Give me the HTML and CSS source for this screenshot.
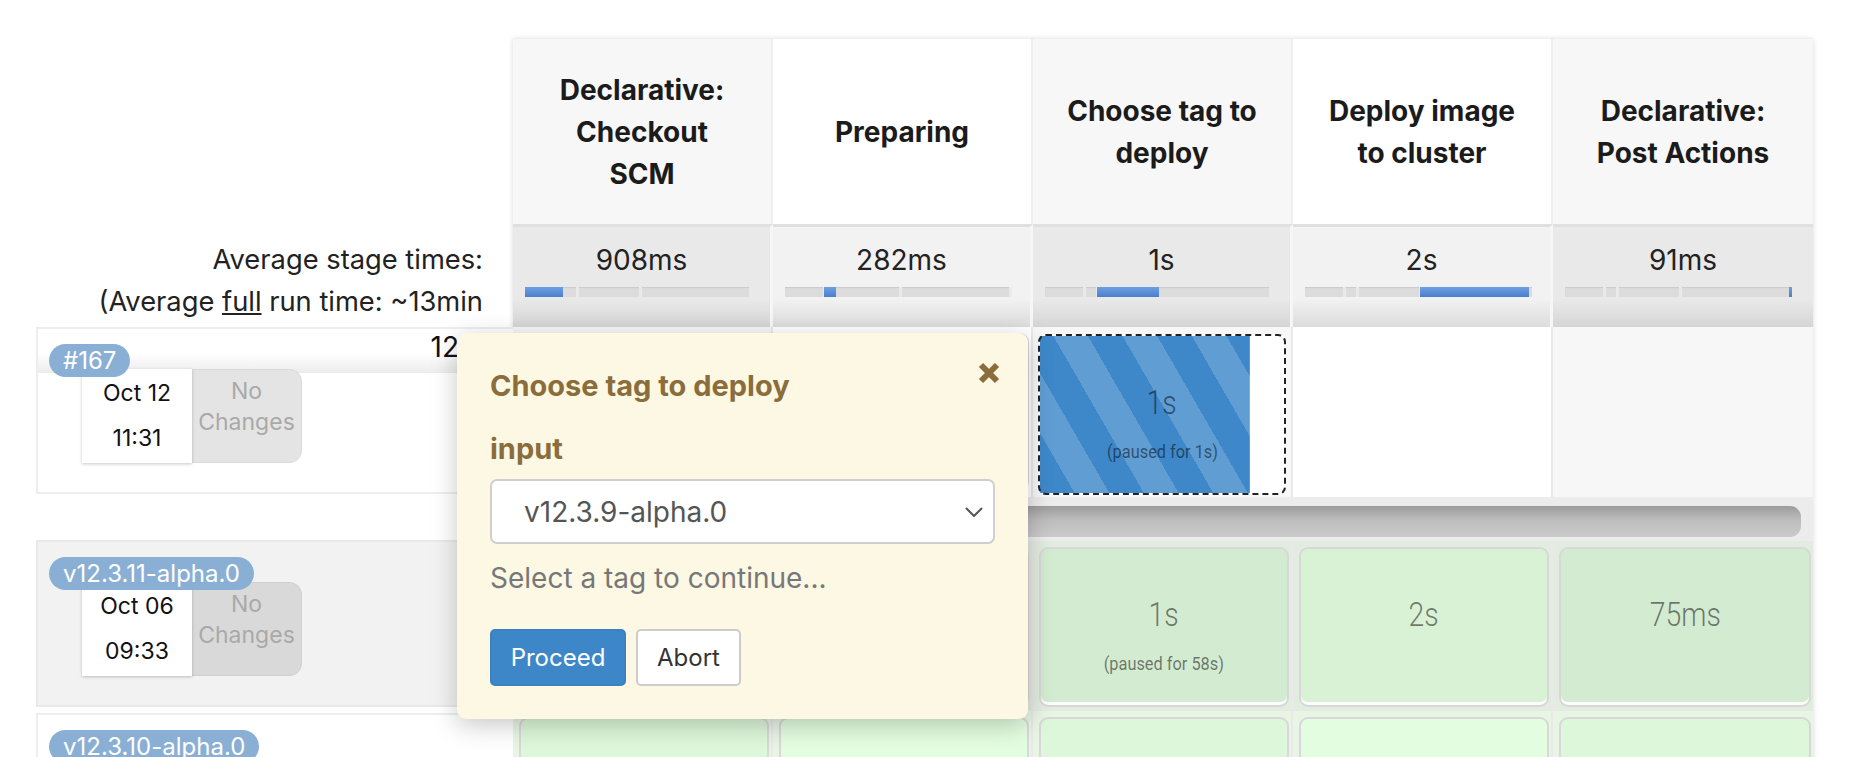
FILE: index.html
```html
<!DOCTYPE html>
<html>
<head>
<meta charset="utf-8">
<title>Stage View</title>
<link rel="stylesheet" href="styles.css">
</head>
<body>
<div class="view">
  <div class="left">
    <div class="left-head"></div>
    <div class="avg-label">Average stage times:<br>(Average <u>full</u> run time: ~13min</div>
    <div class="build">
      <div class="band shade"><span class="dur">12</span></div>
      <span class="badge">#167</span>
      <div class="commit">
        <div class="date">Oct 12<br>11:31</div>
        <div class="changes">No<br>Changes</div>
      </div>
    </div>
    <div class="build-gap"></div>
    <div class="build alt">
      <div class="band"></div>
      <span class="badge">v12.3.11-alpha.0</span>
      <div class="commit">
        <div class="date">Oct 06<br>09:33</div>
        <div class="changes">No<br>Changes</div>
      </div>
    </div>
    <div class="build-gap-small"></div>
    <div class="build last-build">
      <span class="badge">v12.3.10-alpha.0</span>
    </div>
  </div>

  <div class="stages">
    <div class="sh odd">Declarative:<br>Checkout<br>SCM</div>
    <div class="sh even">Preparing</div>
    <div class="sh odd">Choose tag to<br>deploy</div>
    <div class="sh even">Deploy image<br>to cluster</div>
    <div class="sh odd last">Declarative:<br>Post Actions</div>

    <div class="avg odd"><div class="t">908ms</div><div class="pbar"><i class="tick" style="left:51px"></i><i class="tick" style="left:114px"></i><i class="tick" style="left:224px"></i><b class="seg" style="left:0;width:38px"></b></div></div>
    <div class="avg even"><div class="t">282ms</div><div class="pbar"><i class="tick" style="left:38px"></i><i class="tick" style="left:114px"></i><i class="tick" style="left:224px"></i><b class="seg" style="left:39px;width:12px"></b></div></div>
    <div class="avg odd"><div class="t">1s</div><div class="pbar"><i class="tick" style="left:38px"></i><i class="tick" style="left:51px"></i><i class="tick" style="left:224px"></i><b class="seg" style="left:52px;width:62px"></b></div></div>
    <div class="avg even"><div class="t">2s</div><div class="pbar"><i class="tick" style="left:38px"></i><i class="tick" style="left:51px"></i><i class="tick" style="left:114px"></i><b class="seg" style="left:115px;width:109px"></b></div></div>
    <div class="avg odd last"><div class="t">91ms</div><div class="pbar"><i class="tick" style="left:38px"></i><i class="tick" style="left:51px"></i><i class="tick" style="left:114px"></i><b class="seg" style="left:224px;width:3px"></b></div></div>

    <div class="cell r1 odd"><div class="box ok"></div></div>
    <div class="cell r1 even"><div class="box ok even"></div></div>
    <div class="cell r1 odd"><div class="run"><span class="big">1s</span><span class="small">(paused for 1s)</span></div></div>
    <div class="cell r1 even"></div>
    <div class="cell r1 odd last"></div>

    <div class="barrow"><div class="bar"></div></div>

    <div class="cell r2"><div class="box ok"></div></div>
    <div class="cell r2"><div class="box ok even"></div></div>
    <div class="cell r2"><div class="box ok"><span class="big">1s</span><span class="small">(paused for 58s)</span></div></div>
    <div class="cell r2"><div class="box ok even"><span class="big">2s</span></div></div>
    <div class="cell r2 last"><div class="box ok"><span class="big">75ms</span></div></div>

    <div class="cell r3"><div class="box ok3"></div></div>
    <div class="cell r3"><div class="box ok3 even"></div></div>
    <div class="cell r3"><div class="box ok3"></div></div>
    <div class="cell r3"><div class="box ok3 even"></div></div>
    <div class="cell r3 last"><div class="box ok3"></div></div>
  </div>

  <div class="popup">
    <div class="pop-title">Choose tag to deploy</div>
    <svg class="close" width="22" height="22" viewBox="0 0 22 22"><path d="M3 3 L19 19 M19 3 L3 19" stroke="#8a6d3b" stroke-width="6" fill="none"/></svg>
    <div class="pop-label">input</div>
    <div class="select"><span>v12.3.9-alpha.0</span><svg width="18" height="10" viewBox="0 0 18 10"><polyline points="1,1 9,9 17,1" fill="none" stroke="#555" stroke-width="2"/></svg></div>
    <div class="help">Select a tag to continue...</div>
    <div class="buttons"><span class="btn primary">Proceed</span><span class="btn">Abort</span></div>
  </div>
</div>
</body>
</html>
```
FILE: styles.css
```css
* { box-sizing: border-box; }
html, body { margin: 0; height: 757px; overflow: hidden; }
body { font-family: Inter, "Liberation Sans", sans-serif; color: #1b1b1b; background: #fff; }

.view { position: relative; display: flex; align-items: flex-start; padding: 39px 0 0 36px; }

/* left column */
.left { width: 477px; flex: none; display: flex; flex-direction: column; }
.left-head { height: 185px; flex: none; }
.avg-label { height: 103px; flex: none; padding: 15px 30px 0 0; text-align: right; font-size: 27.3px; line-height: 42px; color: #222; white-space: nowrap; }
.build { position: relative; flex: none; height: 167px; border: 2px solid #eee; border-right: none; background: #fff; }
.build.alt { background: #f2f2f2; border-color: #e9e9e9; }
.build.last-build { height: 60px; border-bottom: none; }
.build-gap { height: 46px; flex: none; }
.build-gap-small { height: 6px; flex: none; }
.band { height: 44px; display: flex; justify-content: flex-end; padding-right: 54px; }
.band.shade { background: linear-gradient(to bottom, #fff 0%, #fff 55%, #ececec 100%); }
.dur { font-size: 28px; line-height: 36px; color: #111; }
.badge { position: absolute; left: 11px; top: 15px; z-index: 2; height: 33px; line-height: 33px; padding: 0 14px; border-radius: 17px; background: #8aafd4; color: #fff; font-size: 24px; white-space: nowrap; }
.commit { display: flex; margin: -4px 0 0 44px; }
.date { width: 110px; height: 94px; background: #fff; box-shadow: 0 1px 3px rgba(0,0,0,.22); text-align: center; font-size: 23px; line-height: 45px; padding-top: 2px; color: #111; position: relative; z-index: 1; }
.changes { width: 110px; height: 94px; background: #e4e4e4; border: 1px solid #dadada; border-left: none; border-radius: 0 13px 13px 0; text-align: center; font-size: 23px; line-height: 31px; padding-top: 6px; color: #a9a9a9; }
.alt .changes { background: #d9d9d9; border-color: #d0d0d0; }

/* stage table */
.stages { display: grid; grid-template-columns: repeat(5, 260px); grid-template-rows: 185px 103px 170px 44px 170px 170px; box-shadow: 0 0 5px rgba(0,0,0,.16); }
.sh { display: flex; align-items: center; justify-content: center; text-align: center; font-weight: 700; font-size: 28px; line-height: 42px; color: #1b1b1b; border-right: 2px solid #eee; }
.sh.odd { background: #f7f7f7; }
.sh.even { background: #fff; }
.last { border-right: none !important; }

.avg { border-top: 3px solid #e0e0e0; border-right: 3px solid #f6f6f6; padding-top: 12px; }
.avg.odd { background: linear-gradient(to bottom, #e9e9e9 0%, #e9e9e9 72%, #d5d5d5 100%); }
.avg.even { background: linear-gradient(to bottom, #f2f2f2 0%, #f2f2f2 72%, #dcdcdc 100%); }
.avg .t { text-align: center; font-size: 28px; line-height: 42px; color: #222; }
.pbar { position: relative; width: 227px; height: 10px; margin: 6px 0 0 12px; background: #dcdcdc; box-shadow: inset 0 1px 1px rgba(0,0,0,.08); }
.tick { position: absolute; top: 0; width: 3px; height: 10px; background: #e9e9e9; }
.seg { position: absolute; top: 0; height: 10px; background: linear-gradient(to bottom, #6e9fe0, #4a7fcc); }

.cell { border-right: 2px solid #e9e9e9; }
.cell.r1.odd { background: #f7f7f7; }
.cell.r1.even { background: #fff; }
.cell.r2 { background: #e3ece0; }
.cell.r3 { background: #e8f5e5; }
.box { height: 160px; margin: 6px 2px 0 6px; border: 2px solid #d8d8d8; border-radius: 9px; box-shadow: inset 0 -3px 0 rgba(255,255,255,.85); display: flex; flex-direction: column; align-items: center; padding-top: 46px; }
.box.ok { background: #d3ebd0; }
.box.ok.even { background: #d9f2d6; }
.box.ok3 { background: #ddf7da; }
.box.ok3.even { background: #e3fde0; }
.r1 .box { height: 158px; margin-top: 6px; }

.run { height: 161px; margin: 7px 5px 0 5px; border: 2px dashed #222; border-radius: 8px; display: flex; flex-direction: column; align-items: center; padding-top: 47px;
  background: repeating-linear-gradient(60deg, #3e88c9 0 30px, #5f9dd3 30px 60px) 0 0 / 86% 100% no-repeat, #fff; }
.big { display: inline-block; font-family: Roboto, "Liberation Sans", sans-serif; font-weight: 300; font-size: 33px; line-height: 40px; color: rgba(0,0,0,.5); transform: scaleX(.86); }
.small { display: inline-block; margin-top: 15px; font-family: Roboto, "Liberation Sans", sans-serif; font-size: 19px; line-height: 28px; color: rgba(0,0,0,.5); transform: scaleX(.86); white-space: nowrap; }

.barrow { grid-column: 1 / -1; background: #ececec; padding: 9px 12px 0 6px; }
.bar { height: 31px; border-radius: 11px; background: linear-gradient(to bottom, #9c9c9c 0%, #bdbdbd 45%, #cbcbcb 100%); }

/* popup */
.popup { position: absolute; left: 457px; top: 333px; width: 571px; height: 386px; padding: 32px 33px 0 33px; background: #fcf8e3; border-radius: 9px; box-shadow: 0 6px 26px rgba(0,0,0,.22); z-index: 5; }
.pop-title { font-weight: 700; font-size: 29px; line-height: 42px; color: #8a6d3b; }
.close { position: absolute; right: 28px; top: 29px; }
.pop-label { margin-top: 21px; font-weight: 700; font-size: 29px; line-height: 42px; color: #8a6d3b; }
.select { margin-top: 9px; width: 505px; height: 65px; background: #fff; border: 2px solid #cfcfcf; border-radius: 7px; display: flex; align-items: center; justify-content: space-between; padding: 0 10px 0 32px; font-size: 28px; color: #555; }
.help { margin-top: 13px; font-size: 28px; line-height: 42px; color: #777; }
.buttons { display: flex; gap: 10px; margin-top: 30px; }
.btn { height: 57px; display: flex; align-items: center; padding: 0 19px; font-size: 24px; color: #333; background: #fff; border: 2px solid #ccc; border-radius: 5px; }
.btn.primary { width: 136px; justify-content: center; padding: 0; background: #3d87c8; border-color: #3a82c2; color: #fff; }
```
